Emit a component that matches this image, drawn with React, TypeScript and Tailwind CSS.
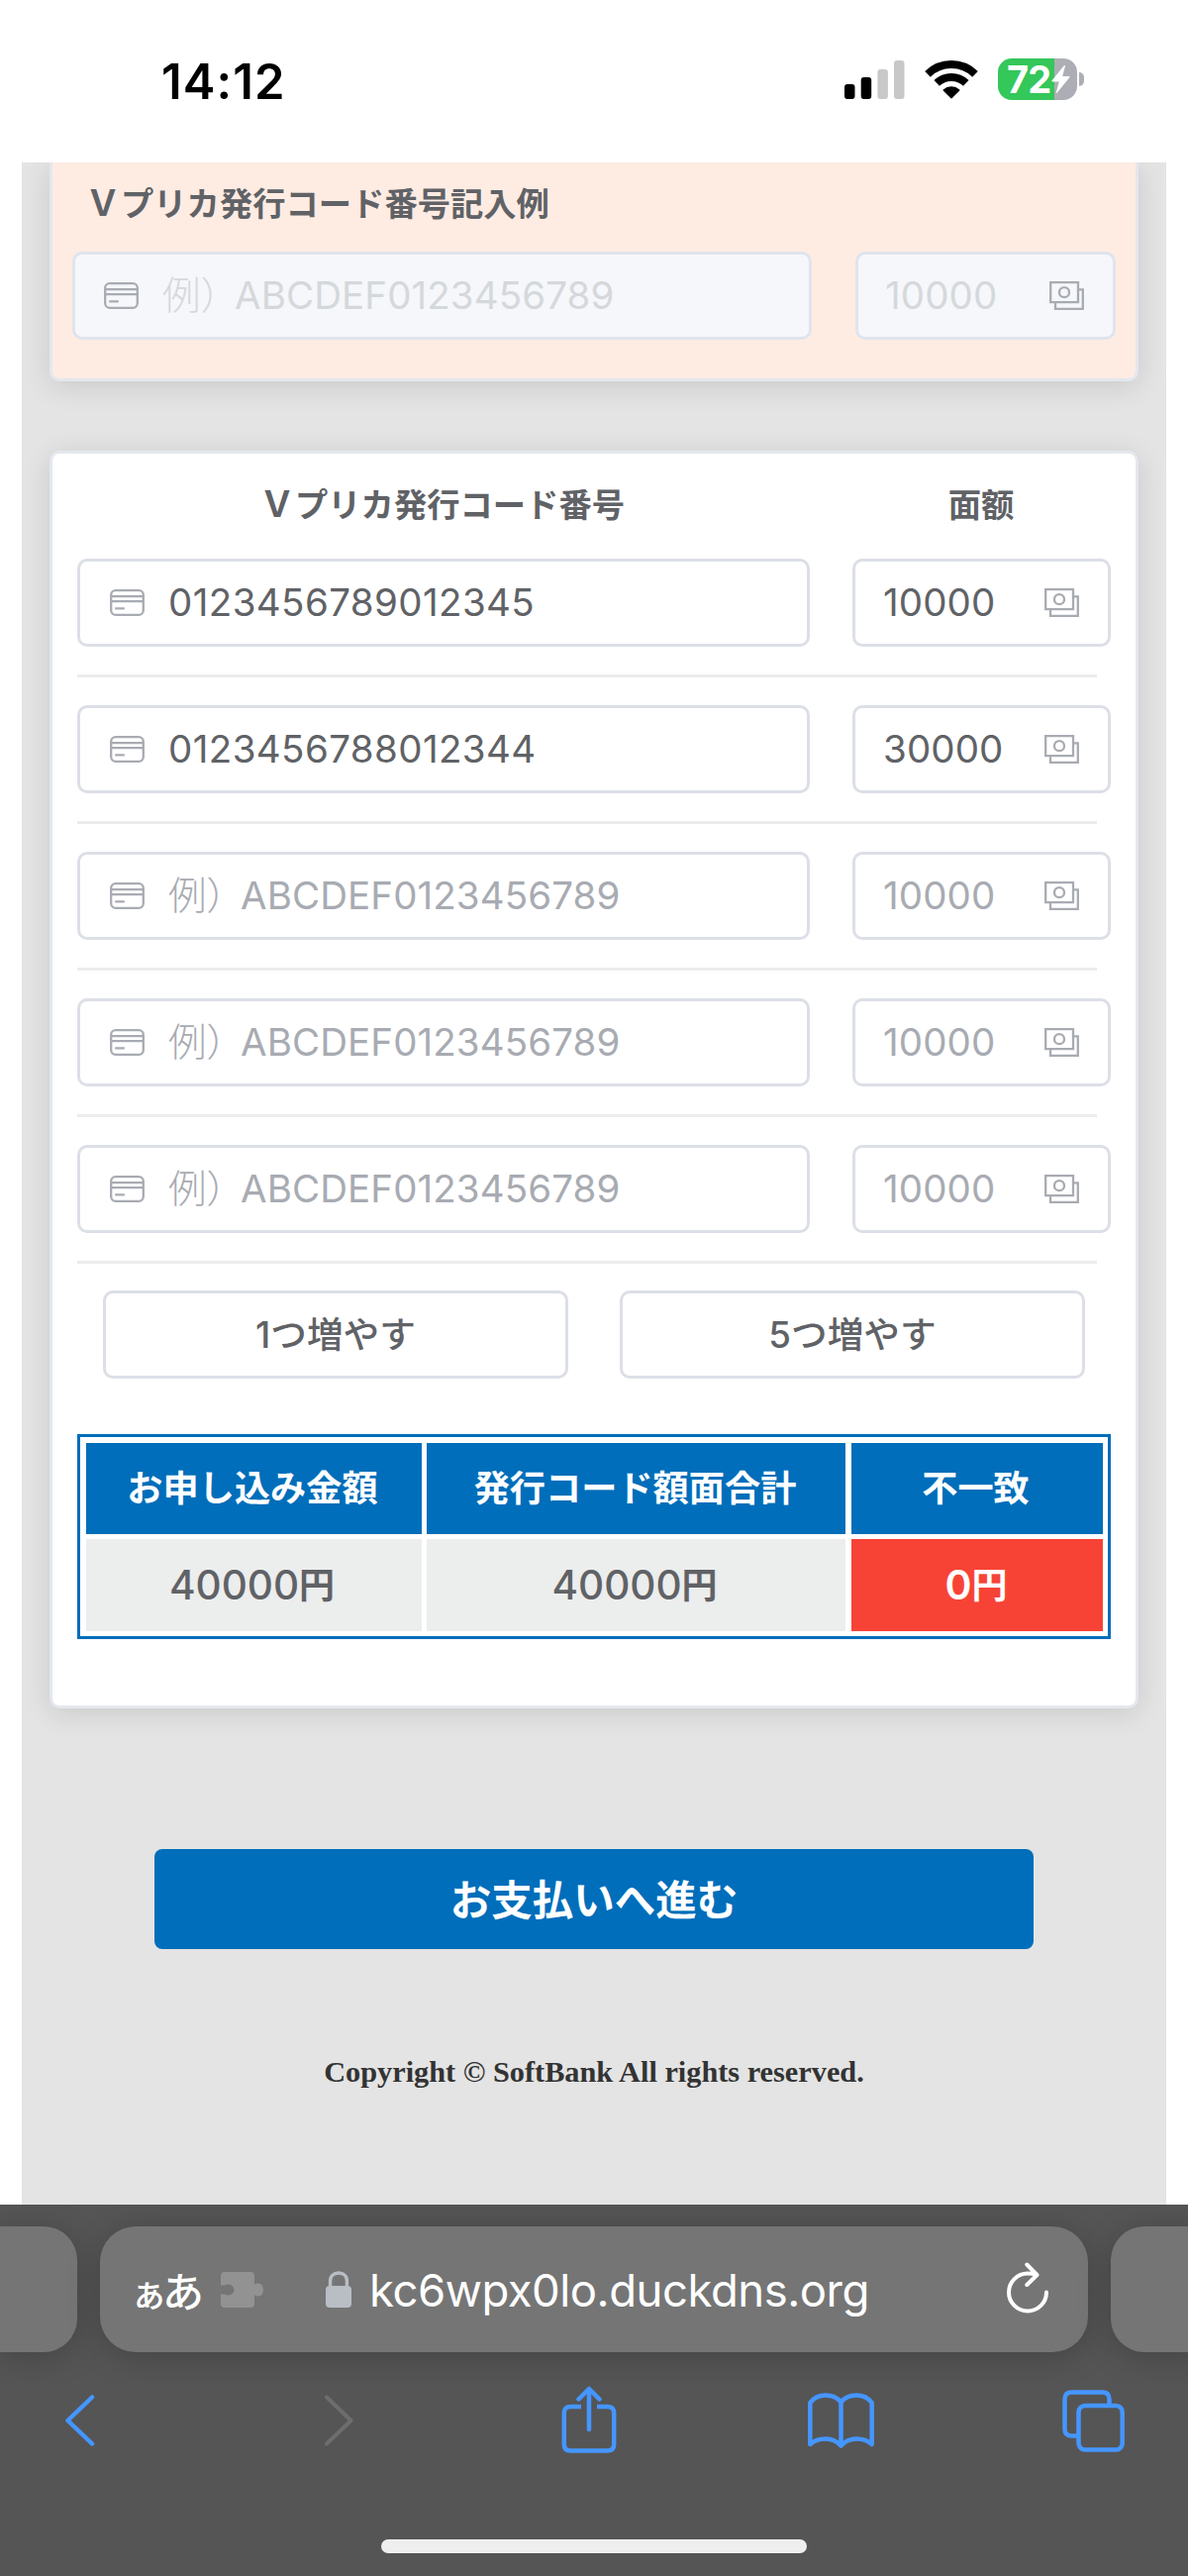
import clsx from "clsx";

interface IconProps {
  className?: string;
}

const CardIcon = ({ className }: IconProps) => (
  <svg viewBox="0 0 35 27" fill="none" stroke="currentColor" strokeWidth={2.3} className={clsx("h-[27px] w-[35px] shrink-0", className)}>
    <rect x="1.200" y="1.200" width="32.600" height="24.600" rx="4.500" />
    <path d="M1 7.200h33M1 12.200h33M5.200 19.300h9.600" />
  </svg>
);

const MoneyIcon = ({ className }: IconProps) => (
  <svg viewBox="0 0 35 29" fill="none" stroke="currentColor" strokeWidth={2.3} className={clsx("h-[29px] w-[35px] shrink-0", className)}>
    <path d="M1.200 1.200H29v20H1.200zM29 8.400h4.800v19.400H6v-6.600" />
    <circle cx="15" cy="11.200" r="5" />
  </svg>
);

const SignalIcon = () => (
  <svg viewBox="0 0 61 39" className="h-[39px] w-[61px]">
    <rect x="0" y="24" width="10.500" height="15" rx="3" />
    <rect x="16.700" y="17" width="10.500" height="22" rx="3" />
    <rect x="33.400" y="9" width="10.500" height="30" rx="3" fill="#c8c8c8" />
    <rect x="50" y="0" width="10.500" height="39" rx="3" fill="#c8c8c8" />
  </svg>
);

const WifiIcon = () => (
  <svg viewBox="0 0 54 40" fill="none" stroke="#000" strokeWidth="8" className="h-10 w-[54px]">
    <path d="M3 14.800a34.300 34.300 0 0 1 48 0M12.200 23.900a21.300 21.300 0 0 1 29.600 0" />
    <path d="M27 38.800 19.200 31a12 12 0 0 1 15.600 0z" fill="#000" strokeWidth="1.500" strokeLinejoin="round" />
  </svg>
);

const Battery = () => (
  <div className="flex items-center gap-[2px]">
    <div className="flex h-[42px] w-[80px] items-center rounded-[14px] bg-[linear-gradient(90deg,#34c759_0_57px,#adaeb5_57px)] pl-[9px]">
      <span className="w-[45px] text-[38px] leading-none font-bold tracking-[-0.800px] text-white">72</span>
      <svg viewBox="0 0 19 28" fill="#fff" className="h-[28px] w-[19px] shrink-0">
        <path d="M13 0 .6 15.200c-.5.700-.2 1.300.6 1.300h6.600L4.800 27.300c-.2.700.5.900.9.400L18.300 12.300c.5-.7.200-1.300-.6-1.300h-6.500L14 .6c.2-.7-.6-1.100-1-.6z" />
      </svg>
    </div>
    <div className="h-[14px] w-[5px] rounded-r-full bg-[#adaeb5]" />
  </div>
);

const StatusBar = () => (
  <header className="flex h-[164px] items-start justify-between bg-white pr-[105px] pl-[163px]">
    <span className="mt-[58px] text-[49px] leading-[49px] font-semibold tracking-[1.100px] text-black">14:12</span>
    <div className="mt-[59px] flex items-center gap-[20px]">
      <SignalIcon />
      <WifiIcon />
      <Battery />
    </div>
  </header>
);

interface FieldProps {
  value?: string;
  placeholder?: string;
  disabled?: boolean;
  className?: string;
}

const fieldClass = (disabled?: boolean, filled?: boolean) =>
  clsx(
    "flex h-[89px] items-center rounded-[10px] border-[3px] text-[38.500px] leading-none",
    disabled ? "border-[#e0e4ec] bg-[#f5f7fa] text-[#d5d8db]" : "border-[#dcdfe6] bg-white",
    !disabled && (filled ? "text-[#606266]" : "text-[#a8abb2]"),
  );

const CodeField = ({ value, disabled, className }: FieldProps) => (
  <div className={clsx(fieldClass(disabled, !!value), disabled ? "pl-[29px]" : "pl-[30px]", className)}>
    <CardIcon className="mr-[24px] text-[#a8abb2]" />
    {value ? (
      <span className="tracking-[0.400px]">{value}</span>
    ) : (
      <span className="flex items-center">
        <span className="w-[73px] font-light">例）</span>
        <span className="tracking-[0.100px]">ABCDEF0123456789</span>
      </span>
    )}
  </div>
);

const AmountField = ({ value, placeholder, disabled, className }: FieldProps) => (
  <div className={clsx(fieldClass(disabled, !!value), "justify-between pr-[29px]", disabled ? "pl-[27px]" : "pl-[28px]", className)}>
    <span className="tracking-[0.100px]">{value ?? placeholder}</span>
    <MoneyIcon className="text-[#a8abb2]" />
  </div>
);

const rows = [
  { code: "0123456789012345", amount: "10000" },
  { code: "0123456788012344", amount: "30000" },
  {},
  {},
  {},
] as { code?: string; amount?: string }[];

const ExampleCard = () => (
  <section className="mx-[28px] h-[221px] rounded-b-[10px] border-[3px] border-t-0 border-[#e4e7ed] bg-[#feece3] pt-[23px] shadow-[0_5px_29px_rgba(0,0,0,0.120)]">
    <h2 className="h-[34px] pl-[36px] text-[33.300px] leading-[34px] font-semibold text-[#606266]">
      <span className="-ml-[3px] text-[36px] leading-none">Ｖ</span>プリカ発行コード番号記入例
    </h2>
    <div className="mt-[33px] flex pl-[20px]">
      <CodeField disabled className="w-[747px]" />
      <AmountField disabled placeholder="10000" className="ml-[44px] w-[263px]" />
    </div>
  </section>
);

const SummaryTable = () => (
  <div className="mt-[56px] grid h-[207px] w-[1044px] grid-cols-[339px_423px_1fr] grid-rows-[92px_93px] gap-[5.500px] border-[3px] border-[#006eba] p-[5.500px] text-center">
    {["お申し込み金額", "発行コード額面合計", "不一致"].map((title) => (
      <div key={title} className="flex items-center justify-center bg-[#006eba] pr-[2px] text-[36.200px] leading-none font-semibold text-white">
        {title}
      </div>
    ))}
    {["40000", "40000"].map((amount, i) => (
      <div key={i} className="flex items-center justify-center bg-[#eceded] pr-[3px] text-[40.500px] leading-none font-medium text-[#606266]">
        {amount}
        <span className="text-[36px] font-semibold">円</span>
      </div>
    ))}
    <div className="flex items-center justify-center bg-[#f74336] pr-px text-[41px] leading-none font-semibold text-white">
      0<span className="text-[36px]">円</span>
    </div>
  </div>
);

const FormCard = () => (
  <section className="mx-[28px] mt-[70px] h-[1270px] rounded-[10px] border-[3px] border-[#e4e7ed] bg-white pl-[25px] shadow-[0_5px_29px_rgba(0,0,0,0.120)]">
    <div className="flex h-[106px] items-center text-[33.300px] font-semibold text-[#606266]">
      <h2 className="w-[740px] text-center">
        <span className="-ml-[3px] text-[36px] leading-none">Ｖ</span>プリカ発行コード番号
      </h2>
      <h2 className="ml-[43px] w-[260px] text-center font-['Inter','Noto_Sans_CJK_SC',sans-serif]">面额</h2>
    </div>
    {rows.map((row, i) => (
      <div key={i} className="h-[147.900px]">
        <div className="flex">
          <CodeField value={row.code} className="w-[740px]" />
          <AmountField value={row.amount} placeholder="10000" className="ml-[43px] w-[261px]" />
        </div>
        <div className="mt-[28px] h-[3px] w-[1030px] bg-[#ececec]" />
      </div>
    ))}
    <div className="flex gap-[52px] pl-[26px]">
      {["1つ増やす", "5つ増やす"].map((label) => (
        <button
          key={label}
          className="h-[89px] w-[470px] rounded-[10px] border-[3px] border-[#dcdfe6] bg-white text-[36.700px] font-medium text-[#606266]"
        >
          {label}
        </button>
      ))}
    </div>
    <SummaryTable />
  </section>
);

const toolbarIcon = "fill-none stroke-[#4596ff] stroke-[4.500]";

const AddressBar = () => (
  <div className="flex gap-[23px] overflow-hidden pt-[22px] pb-[34px]">
    <div className="h-[127px] w-[78px] shrink-0 rounded-r-[34px] bg-[#757575] shadow-[0_5px_34px_rgba(0,0,0,0.200)]" />
    <div className="flex h-[127px] w-[998px] shrink-0 items-center rounded-[36px] bg-[#757575] pl-[34px] text-white shadow-[0_5px_34px_rgba(0,0,0,0.200)]">
      <div className="flex w-[70px] items-baseline font-['Noto_Sans_CJK_JP',sans-serif] leading-none font-medium">
        <span className="-ml-[3px] w-[32px] text-[37px]">ぁ</span>
        <span className="text-[42px]">あ</span>
      </div>
      <svg viewBox="0 0 43 36" fill="#929292" className="ml-[18px] h-[36px] w-[43px]">
        <path d="M4 0h26c2.500 0 4 1.500 4 4v9c1-1 2-1.500 4-1.500 3 0 5 2.800 5 6.500s-2 6.500-5 6.500c-2 0-3-.5-4-1.500v9c0 2.500-1.500 4-4 4H4c-2.500 0-4-1.500-4-4v-9.500h3c1 0 1.500 1 4.500 1s6-2.500 6-5.500-3-5.500-6-5.500-3.500 1-4.500 1H0V4c0-2.500 1.500-4 4-4z" />
      </svg>
      <svg viewBox="0 0 26 37" className="ml-[63px] h-[37px] w-[26px]">
        <path d="M4.600 18V10C4.600 5 8 2 13 2s8.400 3 8.400 8v8" fill="none" stroke="#b9bec5" strokeWidth="3.400" />
        <rect y="15" width="26" height="22" rx="4" fill="#b9bec5" />
      </svg>
      <span className="mt-[2px] ml-[18px] w-[644px] text-[45.500px] leading-none tracking-[-0.500px]">kc6wpx0lo.duckdns.org</span>
      <svg viewBox="0 0 42 52" fill="none" stroke="#fff" strokeWidth="4" strokeLinecap="round" strokeLinejoin="round" className="mb-[3px] h-[52px] w-[42px]">
        <path d="M40 30.500A19 19 0 1 1 21 11.500c3 0 6 .3 9.300 1.300M20.300 2.500l10.200 10.500-10.200 10" />
      </svg>
    </div>
    <div className="h-[127px] w-[100px] shrink-0 rounded-l-[34px] bg-[#757575] shadow-[0_5px_34px_rgba(0,0,0,0.200)]" />
  </div>
);

const Toolbar = () => (
  <nav className="flex h-[70px] items-center pl-[65px]">
    <svg viewBox="0 0 31 52" className={clsx(toolbarIcon, "h-[52px] w-[31px]")} strokeLinecap="round" strokeLinejoin="round">
      <path d="M28 2.500 3.500 26 28 49.500" />
    </svg>
    <svg viewBox="0 0 31 52" className="ml-[231px] h-[52px] w-[31px] fill-none stroke-[#6b6d6f] stroke-[4]" strokeLinecap="round" strokeLinejoin="round">
      <path d="M3 2.500 27.500 26 3 49.500" />
    </svg>
    <svg viewBox="0 0 56 68" className={clsx(toolbarIcon, "mb-[3px] ml-[209px] h-[68px] w-[56px]")} strokeLinejoin="round">
      <path d="M20 21H9.500C5 21 2.800 23.200 2.800 27.700V59c0 4.500 2.200 6.500 6.700 6.500h37c4.500 0 6.700-2 6.700-6.500V27.700c0-4.500-2.200-6.700-6.700-6.700H36" />
      <path d="M28 44V3.500M17.500 13.500 28 3l10.500 10.500" strokeLinecap="round" />
    </svg>
    <svg viewBox="0 0 67 56" className={clsx(toolbarIcon, "ml-[193px] h-[56px] w-[67px]")} strokeLinejoin="round">
      <path d="M33.500 9.500C30 5 24.500 2.500 18 2.500c-6.700 0-12 2.500-15.700 7.500v42C6 48.500 11.500 46.500 18 46.500c6 0 11.500 2.500 15.500 7 4-4.500 9.500-7 15.500-7 6.500 0 12 2 15.700 5.500V10C61 5 55.700 2.500 49 2.500c-6.500 0-12 2.500-15.500 7zM33.500 9.500v44" />
    </svg>
    <svg viewBox="0 0 63 63" className={clsx(toolbarIcon, "ml-[190px] h-[63px] w-[63px]")}>
      <rect x="16.500" y="16" width="44.200" height="44.500" rx="6.500" />
      <path d="M16 46.500H9.500c-4.500 0-7-2.500-7-7V9.500c0-4.500 2.500-7 7-7h31c4.500 0 7 2.500 7 7V16" />
    </svg>
  </nav>
);

export default function App() {
  return (
    <div className="flex h-[2601px] w-[1200px] flex-col overflow-hidden bg-white font-['Inter','Noto_Sans_CJK_JP',sans-serif]">
      <StatusBar />
      <main className="mx-[22px] h-[2062px] overflow-hidden bg-[#e4e4e4]">
        <ExampleCard />
        <FormCard />
        <button className="mx-auto mt-[142px] block h-[101px] w-[888px] rounded-[8px] bg-[#006eba] pt-[3px] text-[41.500px] font-semibold text-white">
          お支払いへ進む
        </button>
        <p className="mt-[106px] text-center font-['Liberation_Serif',serif] text-[30.300px] leading-[36px] font-bold text-[#333]">
          Copyright © SoftBank All rights reserved.
        </p>
      </main>
      <footer className="flex h-[375px] flex-col bg-[#555]">
        <AddressBar />
        <Toolbar />
        <div className="mx-auto mt-[85px] h-[14px] w-[430px] rounded-full bg-[#eee]" />
      </footer>
    </div>
  );
}
